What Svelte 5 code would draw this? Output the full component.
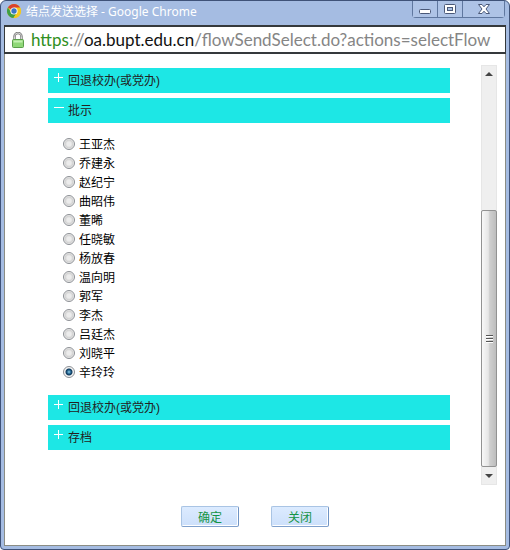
<script>
  let selected = $state('辛玲玲');
  let openId = $state(2);

  const groups = [
    { id: 1, title: '回退校办(或党办)', people: [] },
    {
      id: 2,
      title: '批示',
      people: [
        '王亚杰', '乔建永', '赵纪宁', '曲昭伟', '董晞', '任晓敏', '杨放春',
        '温向明', '郭军', '李杰', '吕廷杰', '刘晓平', '辛玲玲'
      ]
    },
    { id: 3, title: '回退校办(或党办)', people: [] },
    { id: 4, title: '存档', people: [] }
  ];

  function toggle(id) {
    openId = openId === id ? null : id;
  }
</script>

<div class="window">
  <header class="titlebar">
    <svg class="logo" viewBox="0 0 16 16">
      <circle cx="8" cy="8" r="7" fill="#f2c81e" />
      <path d="M8 8 L1.9 4.5 A7 7 0 0 1 14.1 4.5 Z" fill="#d8402f" />
      <path d="M1.9 4.5 A7 7 0 0 0 7.5 15 L10.8 9.6 L5.2 9.6 Z" fill="#3f9e45" />
      <path d="M8 4.5 H14.1 A7 7 0 0 1 7.5 15 L11 9.7 Z" fill="#f2c81e" />
      <circle cx="8" cy="8" r="3.6" fill="#fff" />
      <circle cx="8" cy="8" r="2.7" fill="#3a76c4" />
    </svg>
    <h1>结点发送选择 - Google Chrome</h1>
    <div class="controls">
      <button aria-label="Minimize">
        <svg viewBox="0 0 14 12"><rect x="1.5" y="6.5" width="11" height="4" rx="1" fill="#fff" stroke="#4a5878" /></svg>
      </button>
      <button aria-label="Maximize">
        <svg viewBox="0 0 14 12">
          <rect x="1.5" y="1.5" width="11" height="9" rx="1" fill="#fff" stroke="#4a5878" />
          <rect x="4.5" y="4.5" width="5" height="3" fill="#a9c0e4" stroke="#4a5878" />
        </svg>
      </button>
      <button class="close" aria-label="Close">
        <svg viewBox="0 0 14 12">
          <path d="M1.5 1.5 H5 L7 3.8 L9 1.5 H12.5 L9 6 L12.5 10.5 H9 L7 8.2 L5 10.5 H1.5 L5 6 Z" fill="#fff" stroke="#4a5878" />
        </svg>
      </button>
    </div>
  </header>

  <div class="address">
    <svg class="lock" viewBox="0 0 12 16">
      <path d="M2.5 8 V4.5 A3.5 3.5 0 0 1 9.5 4.5 V8" fill="none" stroke="#777" stroke-width="2.4" />
      <path d="M2.5 8 V4.5 A3.5 3.5 0 0 1 9.5 4.5 V8" fill="none" stroke="#d5d5d5" stroke-width="1" />
      <rect x="0.5" y="7.5" width="11" height="8" rx="1" fill="#8fd877" stroke="#5a9e4a" />
      <path d="M1.5 9.5 H10.5" stroke="#c4f0b2" stroke-width="2" />
    </svg>
    <div class="url"><span class="scheme">https</span>://<span class="host">oa.bupt.edu.cn</span>/flowSendSelect.do?actions=selectFlow</div>
  </div>

  <main>
    <div class="pane">
      <div class="groups">
        {#each groups as group (group.id)}
          <button class="group-title" onclick={() => toggle(group.id)}>
            <svg class="sign" viewBox="0 0 10 10">
              <path d={openId === group.id ? 'M0 4.5 H10' : 'M0 4.5 H9 M4.5 0 V9'} stroke="#fff" />
            </svg>
            <span>{group.title}</span>
          </button>
          {#if openId === group.id && group.people.length}
            <div class="people">
              {#each group.people as person}
                <label>
                  <input type="radio" name="person" value={person} bind:group={selected} />
                  <span>{person}</span>
                </label>
              {/each}
            </div>
          {/if}
        {/each}
      </div>
      <div class="scrollbar">
        <svg class="arrow" viewBox="0 0 16 16"><path d="M4 10 L8 6 L12 10 Z" fill="#444" /></svg>
        <div class="track">
          <div class="thumb"><i></i><i></i><i></i></div>
        </div>
        <svg class="arrow" viewBox="0 0 16 16"><path d="M4 6 L8 10 L12 6 Z" fill="#444" /></svg>
      </div>
    </div>
    <div class="actions">
      <button>确定</button>
      <button>关闭</button>
    </div>
  </main>
</div>

<style>
  :global(body) {
    background: #fff;
  }
  .window {
    box-sizing: border-box;
    min-height: 100vh;
    display: flex;
    flex-direction: column;
    padding: 0 3px 3px;
    border: 1px solid #3f5278;
    border-radius: 6px 6px 4px 4px;
    background: #a5bce2;
    font: 12px/19px "Liberation Sans", "Noto Sans CJK SC", sans-serif;
    color: #000;
  }
  button {
    padding: 0;
    font: inherit;
  }
  .titlebar {
    display: flex;
    align-items: flex-start;
    height: 24px;
  }
  .logo {
    width: 16px;
    height: 16px;
    margin: 2px 4px 0 2px;
  }
  h1 {
    flex: 1;
    margin: 0;
    font: 12px/22px "Noto Sans", "Noto Sans CJK SC", sans-serif;
    color: #fff;
  }
  .controls {
    display: flex;
    margin-right: 1px;
    border: 1px solid #5f779f;
    border-top: 0;
    border-radius: 0 0 4px 4px;
  }
  .controls button {
    display: flex;
    align-items: center;
    justify-content: center;
    width: 25px;
    height: 16px;
    border: 0;
    border-right: 1px solid #5f779f;
    background: #aec3e6;
  }
  .controls .close {
    width: 41px;
    border-right: 0;
  }
  .controls svg {
    width: 14px;
    height: 12px;
  }
  .address {
    display: flex;
    align-items: center;
    height: 25px;
    padding: 0 2px 0 7px;
    border: 2px solid #35393c;
    border-width: 2px 1px;
    background: #fff;
  }
  .lock {
    flex: none;
    width: 12px;
    height: 16px;
    margin-right: 7px;
  }
  .url {
    flex: 1;
    overflow: hidden;
    font: 17px/25px Lato, sans-serif;
    white-space: nowrap;
    color: #858585;
  }
  .scheme {
    color: #2f8f22;
  }
  .host {
    color: #111;
  }
  main {
    flex: 1;
    padding: 11px 8px 18px 43px;
    border: 1px solid #8b8d84;
    border-top: 0;
    background: #fff;
  }
  .pane {
    display: flex;
    gap: 31px;
    height: 420px;
  }
  .groups {
    flex: 1;
    padding-top: 3px;
  }
  .group-title {
    display: flex;
    align-items: center;
    gap: 4px;
    width: 100%;
    height: 25px;
    margin-bottom: 5px;
    padding-left: 6px;
    border: 0;
    background: #1de7e5;
    color: #222;
    text-align: left;
  }
  .group-title span,
  label span {
    padding-top: 2px;
  }
  .sign {
    width: 10px;
    height: 10px;
    margin-bottom: 6px;
  }
  .people {
    padding: 7px 0 13px 15px;
  }
  label {
    display: flex;
    align-items: center;
    gap: 4px;
    height: 19px;
  }
  input {
    appearance: none;
    box-sizing: border-box;
    width: 12px;
    height: 12px;
    margin: 0 0 2px;
    border: 1px solid #8c8f94;
    border-radius: 50%;
    background: radial-gradient(circle, #ececec 0 2px, #d0d0d0 4px, #f6f6f6 5px);
  }
  input:checked {
    background: radial-gradient(circle at 50% 50%, #8fd3f0 0, #1d5a86 2px, #123a5c 3px, #f4f4f4 4px);
  }
  .scrollbar {
    display: flex;
    flex-direction: column;
    width: 16px;
    background: #efefef;
    box-shadow: inset 0 0 0 1px #e6e6e6;
  }
  .arrow {
    width: 16px;
    height: 18px;
  }
  .track {
    flex: 1;
    display: flex;
    flex-direction: column;
    justify-content: flex-end;
  }
  .thumb {
    box-sizing: border-box;
    display: flex;
    flex-direction: column;
    align-items: center;
    justify-content: center;
    gap: 2px;
    height: 67%;
    border: 1px solid #929292;
    border-radius: 2px;
    background: linear-gradient(90deg, #f8f8f8, #e6e6e6 45%, #cfcfcf 55%, #bdbdbd);
  }
  .thumb i {
    width: 7px;
    height: 1px;
    background: #555;
    box-shadow: 0 1px #fff;
  }
  .actions {
    display: flex;
    justify-content: center;
    gap: 32px;
    margin: 21px 35px 0 0;
  }
  .actions button {
    width: 58px;
    height: 21px;
    padding-top: 3px;
    border: 1px solid #a9c4e4;
    border-right-color: #6f93c4;
    border-bottom-color: #7fa0cc;
    border-radius: 2px;
    background: linear-gradient(#dcebff, #cde0fb);
    box-shadow: inset -1px -1px #fff;
    line-height: 16px;
    color: #159447;
  }
</style>
